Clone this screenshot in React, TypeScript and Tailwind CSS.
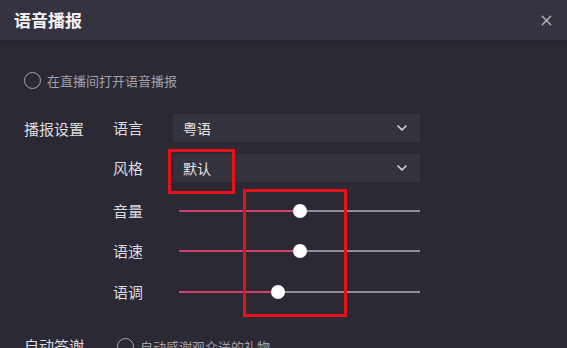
import { ChevronDown, X } from 'lucide-react'

const font = { fontFamily: '"Noto Sans CJK SC", "Noto Sans", sans-serif' }

function Radio({ label }: { label: string }) {
  return (
    <div className="flex items-center gap-[6px]">
      <span className="w-[17px] h-[17px] rounded-full border-[1.5px] border-[#a9a7ae]"></span>
      <span className="text-[13px] text-[#a19fa7] leading-none">{label}</span>
    </div>
  )
}

function Select({ value }: { value: string }) {
  return (
    <div className="w-[247px] h-[28px] bg-[#34323d] flex items-center justify-between pl-[10px] pr-[10px]">
      <span className="text-[14px] text-[#e6e5ea]">{value}</span>
      <ChevronDown size={16} strokeWidth={2.5} className="text-[#d8d7dc]" />
    </div>
  )
}

function Slider({ pct }: { pct: number }) {
  return (
    <div className="relative w-[241px] h-[14px] ml-[6px] flex items-center">
      <div className="h-[2px] bg-[#d6406e]" style={{ width: `${pct}%` }}></div>
      <div className="h-[2px] flex-1 bg-[#8f8d95]"></div>
      <div
        className="absolute top-0 w-[14px] h-[14px] rounded-full bg-white -translate-x-1/2"
        style={{ left: `${pct}%` }}
      ></div>
    </div>
  )
}

export default function App() {
  return (
    <div className="relative w-[567px] h-[348px] overflow-hidden bg-[#2b2933]" style={font}>
      <div className="h-[40px] bg-[#35333f] flex items-center justify-between pl-[14px] pr-[12px]">
        <h1 className="text-[17px] font-bold text-[#f4f3f6]">语音播报</h1>
        <X size={17} strokeWidth={2} className="text-[#b4b2ba]" />
      </div>
      <div className="h-[6px] bg-gradient-to-b from-[#24222b] to-[#2b2933]"></div>

      <div className="pl-[24px] pt-[26px]">
        <Radio label="在直播间打开语音播报" />

        <div className="flex mt-[25px]">
          <div className="w-[89px] pt-[4px] text-[15px] text-[#dddce1]">播报设置</div>
          <div className="flex flex-col">
            <div className="flex items-center gap-[12px] mb-[12px]">
              <span className="w-[48px] text-[15px] text-[#dddce1]">语言</span>
              <Select value="粤语" />
            </div>
            <div className="flex items-center gap-[12px] mb-[19px]">
              <span className="w-[48px] text-[15px] text-[#dddce1]">风格</span>
              <Select value="默认" />
            </div>
            <div className="flex items-center gap-[12px] h-[20px] mb-[20px]">
              <span className="w-[48px] text-[15px] text-[#dddce1]">音量</span>
              <Slider pct={50} />
            </div>
            <div className="flex items-center gap-[12px] h-[20px] mb-[21px]">
              <span className="w-[48px] text-[15px] text-[#dddce1]">语速</span>
              <Slider pct={50} />
            </div>
            <div className="flex items-center gap-[12px] h-[20px]">
              <span className="w-[48px] text-[15px] text-[#dddce1]">语调</span>
              <Slider pct={41} />
            </div>
          </div>
        </div>

        <div className="flex items-center mt-[33px]">
          <span className="w-[93px] text-[15px] text-[#dddce1]">自动答谢</span>
          <Radio label="自动感谢观众送的礼物" />
        </div>
      </div>

      <div className="absolute left-[168px] top-[149px] w-[67px] h-[45px] border-[3px] border-[#e8101c]"></div>
      <div className="absolute left-[243px] top-[189px] w-[104px] h-[128px] border-[3px] border-[#e8101c]"></div>
    </div>
  )
}
